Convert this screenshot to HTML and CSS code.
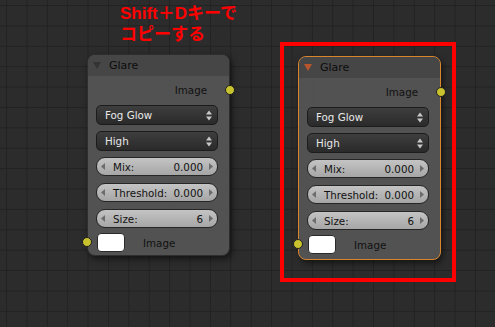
FILE: index.html
```html
<!DOCTYPE html>
<html lang="ja">
<head>
  <meta charset="UTF-8" />
  <title>Glare node - duplicate</title>
  <link rel="stylesheet" href="styles.css">
</head>
<body>

<div class="canvas">
  <div class="note">Shift＋Dキーで<br>コピーする</div>

  <div class="node node-a">
    <div class="node-head"><span class="fold"></span>Glare</div>
    <div class="node-body">
      <div class="out-row">Image<span class="socket socket-out"></span></div>
      <div class="menu">Fog Glow<svg class="updown" width="6" height="11" viewBox="0 0 6 11"><path d="M0 4.5 3 0.5 6 4.5Z M0 6.5 3 10.5 6 6.5Z"/></svg></div>
      <div class="menu">High<svg class="updown" width="6" height="11" viewBox="0 0 6 11"><path d="M0 4.5 3 0.5 6 4.5Z M0 6.5 3 10.5 6 6.5Z"/></svg></div>
      <div class="slider"><svg class="arr" width="4" height="7" viewBox="0 0 4 7"><path d="M4 0 0 3.5 4 7Z"/></svg><span class="lbl">Mix:</span><span class="val">0.000</span><svg class="arr" width="4" height="7" viewBox="0 0 4 7"><path d="M0 0 4 3.5 0 7Z"/></svg></div>
      <div class="slider"><svg class="arr" width="4" height="7" viewBox="0 0 4 7"><path d="M4 0 0 3.5 4 7Z"/></svg><span class="lbl">Threshold:</span><span class="val">0.000</span><svg class="arr" width="4" height="7" viewBox="0 0 4 7"><path d="M0 0 4 3.5 0 7Z"/></svg></div>
      <div class="slider"><svg class="arr" width="4" height="7" viewBox="0 0 4 7"><path d="M4 0 0 3.5 4 7Z"/></svg><span class="lbl">Size:</span><span class="val">6</span><svg class="arr" width="4" height="7" viewBox="0 0 4 7"><path d="M0 0 4 3.5 0 7Z"/></svg></div>
      <div class="in-row"><span class="socket socket-in"></span><span class="swatch"></span>Image</div>
    </div>
  </div>

  <div class="node node-b selected">
    <div class="node-head"><span class="fold"></span>Glare</div>
    <div class="node-body">
      <div class="out-row">Image<span class="socket socket-out"></span></div>
      <div class="menu">Fog Glow<svg class="updown" width="6" height="11" viewBox="0 0 6 11"><path d="M0 4.5 3 0.5 6 4.5Z M0 6.5 3 10.5 6 6.5Z"/></svg></div>
      <div class="menu">High<svg class="updown" width="6" height="11" viewBox="0 0 6 11"><path d="M0 4.5 3 0.5 6 4.5Z M0 6.5 3 10.5 6 6.5Z"/></svg></div>
      <div class="slider"><svg class="arr" width="4" height="7" viewBox="0 0 4 7"><path d="M4 0 0 3.5 4 7Z"/></svg><span class="lbl">Mix:</span><span class="val">0.000</span><svg class="arr" width="4" height="7" viewBox="0 0 4 7"><path d="M0 0 4 3.5 0 7Z"/></svg></div>
      <div class="slider"><svg class="arr" width="4" height="7" viewBox="0 0 4 7"><path d="M4 0 0 3.5 4 7Z"/></svg><span class="lbl">Threshold:</span><span class="val">0.000</span><svg class="arr" width="4" height="7" viewBox="0 0 4 7"><path d="M0 0 4 3.5 0 7Z"/></svg></div>
      <div class="slider"><svg class="arr" width="4" height="7" viewBox="0 0 4 7"><path d="M4 0 0 3.5 4 7Z"/></svg><span class="lbl">Size:</span><span class="val">6</span><svg class="arr" width="4" height="7" viewBox="0 0 4 7"><path d="M0 0 4 3.5 0 7Z"/></svg></div>
      <div class="in-row"><span class="socket socket-in"></span><span class="swatch"></span>Image</div>
    </div>
  </div>

  <div class="select-box"></div>
</div>

</body>
</html>
```

FILE: styles.css
```css
body {
  margin: 0;
  background: #2b2b2b;
  font-family: "DejaVu Sans", sans-serif;
}

.canvas {
  position: relative;
  width: 495px;
  height: 327px;
  overflow: hidden;
  background-color: #2c2c2c;
  background-image:
    linear-gradient(to right, #222 1px, transparent 1px),
    linear-gradient(to bottom, #222 1px, transparent 1px);
  background-size: 20.4px 20.4px;
  background-position: 6px 5px;
}

.note {
  position: absolute;
  left: 120px;
  top: 3px;
  color: #ff0000;
  font-family: "Liberation Sans", "Noto Sans CJK JP", sans-serif;
  font-weight: bold;
  font-size: 17px;
  line-height: 21px;
}

/* nodes */
.node {
  position: absolute;
  width: 143px;
  height: 202px;
  box-sizing: border-box;
  border: 1px solid #2e2e2e;
  border-radius: 8px;
  background: rgba(84, 84, 84, 0.95);
  box-shadow: 2px 3px 6px rgba(0,0,0,0.55);
  display: flex;
  flex-direction: column;
  font-size: 10.3px;
  color: #111;
}
.node-a { left: 87px; top: 54px; }
.node-b { left: 298px; top: 56px; height: 204px; }

.node.selected {
  border-color: #d8852e;
}

.node-head {
  height: 21px;
  display: flex;
  align-items: center;
  padding-left: 5px;
  background: rgba(70, 70, 70, 0.95);
  border-radius: 7px 7px 0 0;
  color: #0c0c0c;
  font-size: 11px;
}
.fold {
  width: 0;
  height: 0;
  border-left: 4.5px solid transparent;
  border-right: 4.5px solid transparent;
  border-top: 7px solid #333;
  margin-right: 8px;
}
.selected .fold {
  border-top-color: #b9552c;
}

.node-body {
  position: relative;
  display: flex;
  flex-direction: column;
  padding: 4px 11px 0 8px;
}

.out-row {
  position: relative;
  height: 20px;
  line-height: 20px;
  text-align: right;
  padding-right: 11px;
}

.socket {
  position: absolute;
  width: 8px;
  height: 8px;
  border-radius: 50%;
  background: #c9c22f;
  border: 1px solid #1e1e1e;
}
.socket-out { right: -17px; top: 5px; }
.socket-in { left: -14px; top: 4px; }

.menu {
  margin-top: 5px;
  height: 20px;
  box-sizing: border-box;
  display: flex;
  align-items: center;
  justify-content: space-between;
  padding: 0 5px 0 8px;
  border: 1px solid #1c1c1c;
  border-radius: 5px;
  background: linear-gradient(#3e3e3e, #2a2a2a);
  color: #e8e8e8;
}
.menu + .menu { margin-top: 6px; }
.updown { fill: #c8c8c8; }

.slider {
  margin-top: 6px;
  height: 19px;
  box-sizing: border-box;
  display: flex;
  align-items: center;
  padding: 0 4px;
  border: 1px solid #262626;
  border-radius: 9px;
  background: linear-gradient(#c4c4c4, #a6a6a6);
  color: #111;
}
.slider + .slider { margin-top: 7px; }
.arr { fill: #6c6c6c; flex: none; }
.lbl { margin-left: 8px; }
.val { margin-left: auto; margin-right: 6px; }

.in-row {
  position: relative;
  margin-top: 5px;
  height: 19px;
  display: flex;
  align-items: center;
  padding-left: 1px;
}
.swatch {
  width: 28px;
  height: 19px;
  box-sizing: border-box;
  border: 1px solid #2a2a2a;
  border-radius: 4px;
  background: #fff;
  margin-right: 18px;
}

.select-box {
  position: absolute;
  left: 280px;
  top: 42px;
  width: 176px;
  height: 240px;
  box-sizing: border-box;
  border: 4px solid #ff0000;
}
```
